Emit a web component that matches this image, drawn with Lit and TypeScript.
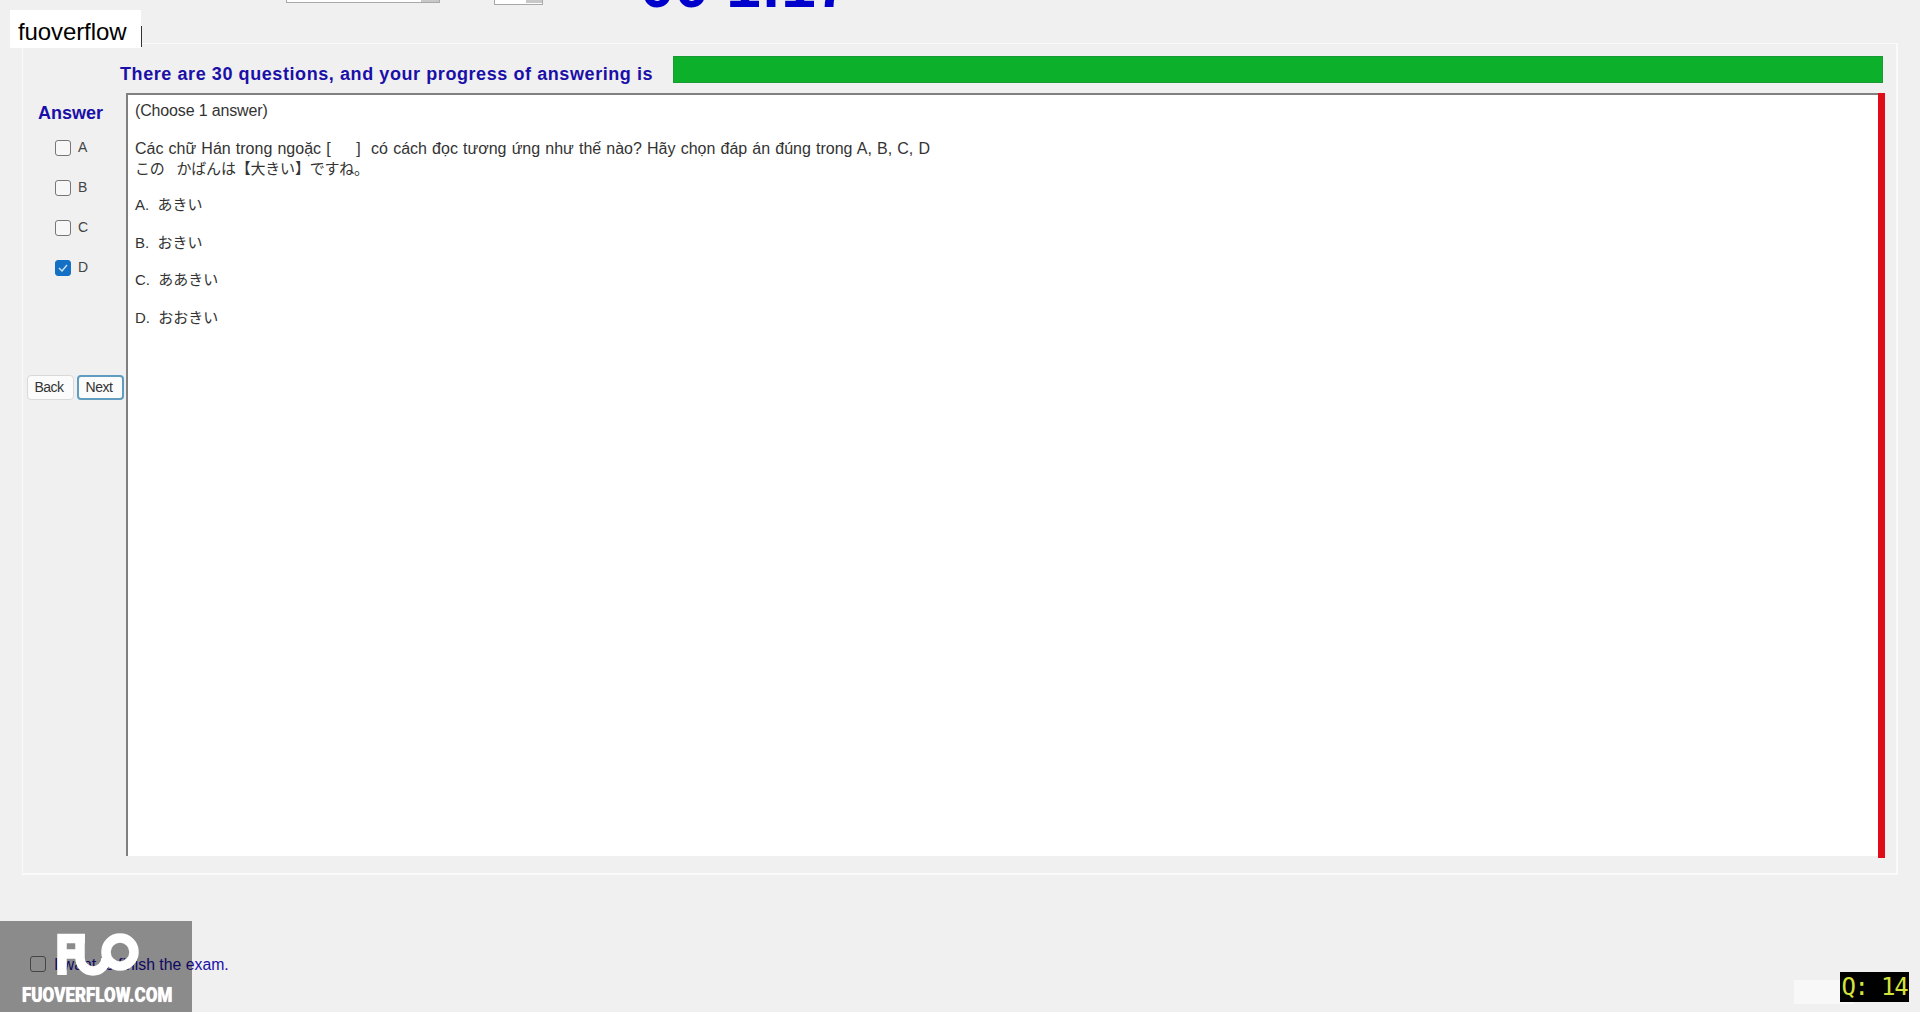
import { LitElement, html, css } from "lit";
import { customElement } from "lit/decorators.js";

const UI = css`"Liberation Sans", Arial, "Noto Sans CJK JP", sans-serif`;

@customElement("app-root")
export class AppRoot extends LitElement {
  static styles = css`
    :host { display: block; position: relative; width: 1920px; height: 1012px; overflow: hidden; background: #f0f0f0; font-family: ${UI}; color: #333; }
    * { box-sizing: border-box; }
    .top { height: 43px; display: flex; align-items: flex-start; padding-left: 286px; }
    .combo { background: #fff; border: 1px solid #a8a8a8; border-top: 0; display: flex; justify-content: flex-end; }
    .combo i { display: block; background: #c8c8c8; }
    .c1 { width: 154px; height: 3px; margin-right: 54px; }
    .c1 i { width: 18px; }
    .c2 { width: 49px; height: 5px; margin-right: 97px; }
    .c2 i { width: 16px; height: 3px; }
    .clock { height: 8px; overflow: hidden; display: flex; align-items: flex-end; }
    .clock span { display: block; font: bold 62px/62px "Liberation Sans", Arial, sans-serif; color: #0000cd; white-space: pre; margin-bottom: -9px; }
    .panel { width: 1876px; height: 832px; margin-left: 22px; border: 1px solid #fafafa; border-width: 1px 2px 2px 1px; display: flex; flex-direction: column; padding: 12px 11px 15px 0; }
    .head { display: flex; align-items: flex-start; height: 28px; padding-left: 97px; flex: none; }
    .head .msg { width: 553px; font: bold 18px/20px "Liberation Sans", Arial, sans-serif; letter-spacing: 0.58px; color: #1a0fa8; padding-top: 8px; white-space: nowrap; }
    .bar { flex: 1; height: 27px; background: #0cb02b; border: 1px solid #1a9a34; margin-right: 2px; }
    .body { flex: 1; display: flex; margin-top: 9px; min-height: 0; }
    .side { width: 103px; flex: none; display: flex; flex-direction: column; }
    .side h2 { margin: 8px 0 15px 15px; font: bold 18px/24px "Liberation Sans", Arial, sans-serif; color: #1a0fa8; }
    .opt { display: flex; align-items: flex-start; height: 40px; padding-left: 32px; font-size: 14px; line-height: 14px; color: #444; gap: 7px; }
    .box { width: 16px; height: 16px; border: 1.5px solid #777; border-radius: 3px; background: #f7f7f7; flex: none; display: block; }
    .box.on { background: #1470c4; border-color: #1470c4; display: grid; place-items: center; }
    .btns { display: flex; gap: 3px; margin: 75px 0 0 4px; }
    .btn { width: 47px; height: 25px; border: 1px solid #d9d9d9; border-radius: 4px; background: #fbfbfb; font: 14px/23px "Liberation Sans", Arial, sans-serif; letter-spacing: -0.5px; color: #333; text-align: center; padding: 0 3px 0 0; }
    .btn.focus { border: 2px solid #5f9cc0; line-height: 21px; }
    .main { flex: 1; display: flex; min-width: 0; }
    .sheet { flex: 1; background: #fff; border-top: 2px solid #808080; border-left: 2px solid #808080; padding: 6px 0 0 7px; font-size: 16px; line-height: 19px; color: #333; margin-bottom: 2px; }
    .sheet p { margin: 0; white-space: pre; }
    .hint { letter-spacing: -0.15px; }
    .q { margin-top: 19px !important; line-height: 20px; word-spacing: 0.7px; }
    .ja { font-size: 15px; }
    .long { letter-spacing: -0.2px; margin-bottom: -1.5px !important; }
    .a { margin-top: 18.5px !important; }
    .red { width: 7px; flex: none; background: #e00d18; }
    .tab { position: absolute; left: 10px; top: 10px; width: 131px; height: 38px; background: #fff; color: #000; font-size: 24px; line-height: 44px; padding-left: 8px; letter-spacing: -0.1px; }
    .caret { position: absolute; left: 141px; top: 26px; width: 1px; height: 21px; background: #333; }
    .finish { position: absolute; left: 30px; top: 956px; display: flex; align-items: center; gap: 8px; font-size: 15.8px; color: #1a0fa8; line-height: 18px; }
    .finish .box { background: transparent; margin-top: -3px; }
    .mark { position: absolute; left: 0; bottom: 0; width: 192px; height: 91px; background: rgba(0, 0, 0, 0.42); }
    .mark svg { position: absolute; left: 50px; top: 8px; }
    .mark span { position: absolute; left: 22px; top: 63px; color: #fff; font: 900 21px/22px Roboto, "Liberation Sans", sans-serif; transform: scaleX(0.81); transform-origin: left; white-space: nowrap; text-shadow: 0 0 1px #fff; }
    .blank { position: absolute; left: 1794px; top: 980px; width: 60px; height: 24px; background: #f8f8f8; }
    .qn { position: absolute; left: 1840px; top: 972px; width: 69px; height: 30px; background: #000; color: #d4e23c; font: 24px/30px "DejaVu Sans Mono", monospace; white-space: pre; text-align: center; letter-spacing: -1.2px; }
  `;

  render() {
    const opts = ["A", "B", "C", "D"];
    return html`
      <div class="top">
        <div class="combo c1"><i></i></div>
        <div class="combo c2"><i></i></div>
        <div class="clock"><span>00 1:17</span></div>
      </div>
      <div class="panel">
        <div class="head">
          <div class="msg">There are 30 questions, and your progress of answering is</div>
          <div class="bar"></div>
        </div>
        <div class="body">
          <div class="side">
            <h2>Answer</h2>
            ${opts.map(
              (o) => html`<div class="opt">
                ${o === "D"
                  ? html`<span class="box on"><svg width="10" height="8" viewBox="0 0 10 8"><path d="M1 4l3 3 5-6" fill="none" stroke="#cfe4f6" stroke-width="1.4"/></svg></span>`
                  : html`<span class="box"></span>`}
                <span>${o}</span>
              </div>`
            )}
            <div class="btns">
              <button class="btn">Back</button>
              <button class="btn focus">Next</button>
            </div>
          </div>
          <div class="main">
            <div class="sheet">
              <p class="hint">(Choose 1 answer)</p>
              <p class="q">Các chữ Hán trong ngoặc [     ]  có cách đọc tương ứng như thế nào? Hãy chọn đáp án đúng trong A, B, C, D</p>
              <p class="ja long" lang="ja">この   かばんは【大きい】ですね。</p>
              <p class="ja a" lang="ja">A.  あきい</p>
              <p class="ja a" lang="ja">B.  おきい</p>
              <p class="ja a" lang="ja">C.  ああきい</p>
              <p class="ja a" lang="ja">D.  おおきい</p>
            </div>
            <div class="red"></div>
          </div>
        </div>
      </div>
      <div class="tab">fuoverflow</div>
      <div class="caret"></div>
      <label class="finish"><span class="box"></span><span>I want to finish the exam.</span></label>
      <div class="mark">
        <svg width="100" height="50" viewBox="0 0 100 50" aria-hidden="true">
          <g fill="none" stroke="#fff" stroke-width="9.5">
            <path d="M12 46V9.5H35M12 25H30"/>
            <path d="M30 5V29A13 13 0 0 0 56 29"/>
            <circle cx="70" cy="23" r="14"/>
          </g>
        </svg>
        <span>FUOVERFLOW.COM</span>
      </div>
      <div class="blank"></div>
      <div class="qn">Q: 14</div>
    `;
  }
}
